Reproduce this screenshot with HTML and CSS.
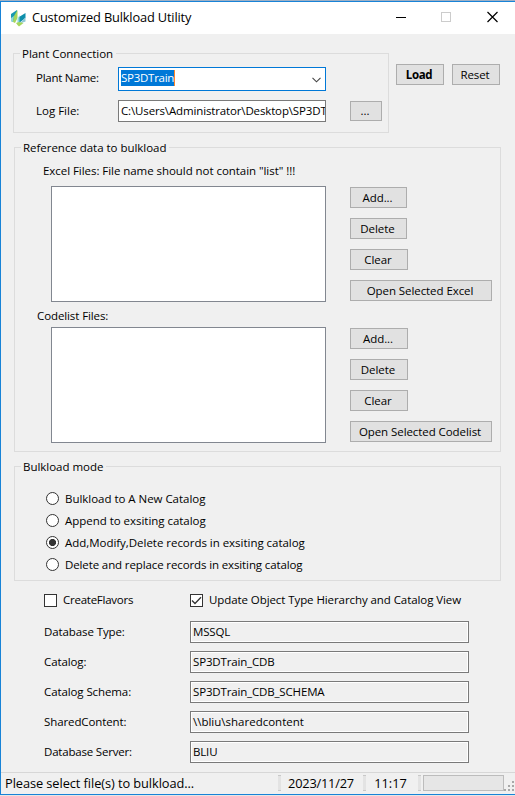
FILE: index.html
```html
<!DOCTYPE html>
<html lang="en">
<head>
<meta charset="utf-8">
<title>Customized Bulkload Utility</title>
<link rel="stylesheet" href="styles.css">
</head>
<body>
<div class="backdrop"></div>
<div class="window">
  <header class="titlebar">
    <svg class="logo" width="15" height="17" viewBox="0 0 15 17">
      <path d="M0 4L6 0V4L2 12L0 11Z" fill="#1899b0"/>
      <path d="M0 8L3 6L2 12L0 11Z" fill="#8fd8dc"/>
      <path d="M6.5 0V8L4 13L2 12L3 6Z" fill="#a5d65c"/>
      <path d="M8 7L14.5 3V8L8 13Z" fill="#0f8fab"/>
      <path d="M14.5 7V11.5L9 13.5Z" fill="#8fc9d6"/>
      <path d="M6.5 9L8.5 5V12L6.5 14Z" fill="#8fd8dc"/>
      <path d="M5 13L8 12L12.5 13L8 16.5L6.5 15Z" fill="#a5d65c"/>
    </svg>
    <h1 class="title">Customized Bulkload Utility</h1>
    <svg class="controls" width="102" height="12" viewBox="0 0 102 12" fill="none">
      <path d="M0 6.5H10" stroke="#000"/>
      <rect x="45.5" y="1.5" width="9" height="9" stroke="#ccc"/>
      <path d="M91.5 1L101.5 11M101.5 1L91.5 11" stroke="#000" stroke-width="1.2"/>
    </svg>
  </header>

  <main class="content">
    <div class="top">
      <section class="group connection">
        <h2 class="legend">Plant Connection</h2>
        <div class="row plant">
          <span class="label">Plant Name:</span>
          <div class="combo"><span class="selected">SP3DTrain</span>
            <svg class="chevron" width="9" height="6" viewBox="0 0 9 6" fill="none"><path d="M.5 .8L4.5 4.8L8.5 .8" stroke="#444" stroke-width="1.1"/></svg>
          </div>
        </div>
        <div class="row log">
          <span class="label">Log File:</span>
          <div class="input path">C:\Users\Administrator\Desktop\SP3DT</div>
          <button class="btn browse">...</button>
        </div>
      </section>
      <div class="actions">
        <button class="btn load">Load</button>
        <button class="btn reset">Reset</button>
      </div>
    </div>

    <section class="group reference">
      <h2 class="legend">Reference data to bulkload</h2>
      <p class="caption excel">Excel Files: File name should not contain "list" !!!</p>
      <div class="files">
        <div class="list"></div>
        <div class="buttons">
          <button class="btn small">Add...</button>
          <button class="btn small">Delete</button>
          <button class="btn medium">Clear</button>
          <button class="btn wide">Open Selected Excel</button>
        </div>
      </div>
      <p class="caption codelist">Codelist Files:</p>
      <div class="files">
        <div class="list"></div>
        <div class="buttons">
          <button class="btn medium">Add...</button>
          <button class="btn medium">Delete</button>
          <button class="btn medium">Clear</button>
          <button class="btn wide">Open Selected Codelist</button>
        </div>
      </div>
    </section>

    <section class="group mode">
      <h2 class="legend">Bulkload mode</h2>
      <div class="radios">
        <label class="option"><i class="radio"></i><span>Bulkload to A New Catalog</span></label>
        <label class="option"><i class="radio"></i><span>Append to exsiting catalog</span></label>
        <label class="option"><i class="radio on"></i><span>Add,Modify,Delete records in exsiting catalog</span></label>
        <label class="option"><i class="radio"></i><span class="replace">Delete and replace records in exsiting catalog</span></label>
      </div>
    </section>

    <div class="checks">
      <label class="check"><i class="box"></i><span class="flavors">CreateFlavors</span></label>
      <label class="check"><i class="box"><svg width="11" height="11" viewBox="0 0 11 11" fill="none"><path d="M1 5.5L4 8.5L10 2.3" stroke="#333" stroke-width="1.3"/></svg></i><span class="update">Update Object Type Hierarchy and Catalog View</span></label>
    </div>

    <div class="details">
      <span>Database Type:</span><div class="field">MSSQL</div>
      <span>Catalog:</span><div class="field">SP3DTrain_CDB</div>
      <span>Catalog Schema:</span><div class="field">SP3DTrain_CDB_SCHEMA</div>
      <span>SharedContent:</span><div class="field shared">\\bliu\sharedcontent</div>
      <span class="server">Database Server:</span><div class="field">BLIU</div>
    </div>
  </main>

  <footer class="status">
    <span class="message">Please select file(s) to bulkload...</span>
    <i class="divider"></i>
    <span class="date">2023/11/27</span>
    <i class="divider"></i>
    <span class="time">11:17</span>
    <i class="divider"></i>
    <div class="progress"></div>
    <svg class="grip" width="10" height="11" viewBox="0 0 10 11" fill="#a8a8a8"><path d="M8 0h2v2h-2zM4 4h2v2h-2zM8 4h2v2h-2zM0 8h2v2h-2zM4 8h2v2h-2zM8 8h2v2h-2z"/></svg>
  </footer>
</div>
</body>
</html>
```
FILE: styles.css
```css
* { box-sizing: border-box; }
body {
  margin: 0;
  width: 515px;
  height: 796px;
  overflow: hidden;
  background: #e6e6e6;
  font: 11.5px/16px "Open Sans", "Noto Sans", sans-serif;
  letter-spacing: -0.03px;
  color: #000;
}
h1, h2, p { margin: 0; font-size: inherit; font-weight: normal; }
.backdrop { height: 1px; background: #9fb0c4; }
.window {
  height: 794px;
  display: flex;
  flex-direction: column;
  border: solid #1883d7;
  border-width: 1px 0 1px 1px;
  background: #f0f0f0;
}
.titlebar {
  height: 32px;
  flex: none;
  display: flex;
  align-items: center;
  padding: 0 0 2px 10px;
  background: #fff;
}
.logo { margin-top: 2px; }
.title { margin-left: 6px; font-size: 12.8px; line-height: 18px; letter-spacing: -0.16px; white-space: nowrap; }
.controls { margin: 0 17px 0 auto; }
.content { flex: none; height: 738px; padding: 19px 0 0 12px; }
.top { display: flex; }
.group { border: 1px solid #dcdcdc; white-space: nowrap; }
.legend {
  width: max-content;
  height: 16px;
  margin: -8px 0 0 6px;
  padding: 0 3px 0 2px;
  background: #f0f0f0;
}
.connection { width: 376px; height: 80px; }
.row { display: flex; align-items: center; padding-left: 22px; }
.label { width: 82px; margin-top: -2px; letter-spacing: -0.25px; }
.log .label { margin-top: 0; letter-spacing: 0; }
.plant { margin-top: 5px; height: 24px; }
.log { margin-top: 9px; height: 22px; }
.combo {
  width: 208px;
  height: 24px;
  display: flex;
  align-items: center;
  justify-content: space-between;
  padding: 0 4px 2px 2px;
  border: 1px solid #0078d7;
  background: #fff;
}
.selected { background: #0078d7; color: #fff; border-right: 1px solid #ff8728; letter-spacing: -0.27px; }
.chevron { margin-top: 3px; }
.input {
  width: 208px;
  height: 22px;
  padding: 2px 0 0 2px;
  border: 1px solid #7a7a7a;
  background: #fff;
  overflow: hidden;
}
.path { letter-spacing: -0.14px; }
.btn {
  display: block;
  height: 21px;
  padding: 0 2px 0 0;
  border: 1px solid #adadad;
  background: #e1e1e1;
  font: inherit;
  line-height: 18px;
  letter-spacing: -0.07px;
  color: #000;
  white-space: nowrap;
}
.browse { width: 32px; height: 20px; margin-left: 24px; }
.actions { display: flex; gap: 8px; margin: 11px 0 0 7px; }
.load, .reset { width: 48px; padding-right: 2px; }
.load { font-weight: bold; letter-spacing: -0.35px; }
.reference { width: 487px; height: 305px; margin: 14px 0 0 1px; }
.caption.excel { margin: 7px 0 7px 28px; letter-spacing: -0.05px; }
.caption.codelist { margin: 6px 0 3px 22px; letter-spacing: -0.1px; }
.files { display: flex; gap: 24px; padding-left: 36px; height: 116px; }
.list { width: 275px; height: 116px; border: 1px solid #828790; background: #fff; }
.buttons { display: flex; flex-direction: column; gap: 10px; padding-top: 1px; }
.small { width: 57px; }
.medium { width: 58px; }
.wide { width: 142px; padding-right: 2px; }
.mode { width: 487px; height: 115px; margin: 14px 0 0 1px; }
.radios { padding: 12px 0 0 31px; }
.option { display: flex; align-items: center; gap: 6px; height: 22px; }
.option span { padding-top: 2px; }
.replace { letter-spacing: -0.12px; }
.radio {
  width: 13px;
  height: 13px;
  border: 1px solid #333;
  border-radius: 50%;
  background: #fff;
}
.radio.on { background: radial-gradient(circle, #333 0 3.2px, #fff 3.9px); }
.checks { display: grid; grid-template-columns: 146px 1fr; margin: 10px 0 0 31px; }
.check { display: flex; align-items: center; gap: 6px; height: 18px; white-space: nowrap; }
.flavors { letter-spacing: -0.25px; }
.update { letter-spacing: -0.08px; }
.box { width: 13px; height: 13px; border: 1px solid #333; background: #fff; }
.box svg { display: block; }
.details {
  display: grid;
  grid-template-columns: 146px 279px;
  row-gap: 8px;
  align-items: center;
  margin: 12px 0 0 31px;
  letter-spacing: -0.1px;
}
.server { letter-spacing: -0.2px; }
.field {
  height: 22px;
  padding: 2px 0 0 2px;
  border: 1px solid #7a7a7a;
  box-shadow: inset 0 0 0 1px #fff;
  letter-spacing: -0.16px;
}
.shared { letter-spacing: 0; }
.status {
  flex: 1;
  display: flex;
  align-items: center;
  padding-bottom: 1px;
  border-top: 1px solid #d7d7d7;
  font-size: 12.8px;
  letter-spacing: -0.07px;
  white-space: nowrap;
}
.message { width: 273px; margin-left: 4px; }
.divider { width: 3px; height: 16px; flex: none; border: solid #c8c8c8; border-width: 1px 0; background: #e3e3e3; }
.date, .time { text-align: center; }
.date { width: 82px; padding-right: 2px; letter-spacing: -0.2px; }
.time { width: 52px; padding-right: 3px; }
.progress { width: 81px; height: 16px; margin-left: 2px; border: 1px solid #bcbcbc; background: #e6e6e6; }
.grip { margin: 6px 0 0 0; }
```
